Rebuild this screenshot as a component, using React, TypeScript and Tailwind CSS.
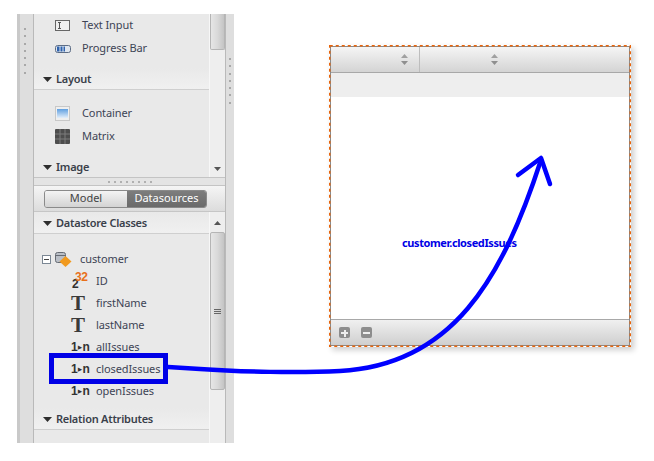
const font = "font-['Noto_Sans',sans-serif]";

function TriangleDown({ className = "" }: { className?: string }) {
  return (
    <svg width="9" height="5" viewBox="0 0 9 5" className={className}>
      <path d="M0 0h9L4.5 5z" fill="#2e2e2e" />
    </svg>
  );
}

function SectionHeader({ label }: { label: string }) {
  return (
    <div className="flex items-center gap-[4px] pl-[9px] pt-[2px] h-full text-[11px] font-semibold text-[#3a3f4a] tracking-[-0.25px]">
      <TriangleDown />
      <span>{label}</span>
    </div>
  );
}

function Section({ label }: { label: string }) {
  return (
    <div className="h-[22px] border-b border-[#cfcfcf] bg-gradient-to-b from-[#e9e9e9] to-[#f0f0f0]">
      <SectionHeader label={label} />
    </div>
  );
}

function WidgetRow({ icon, label }: { icon: React.ReactNode; label: string }) {
  return (
    <div className="h-[23px] flex items-center text-[11px] text-[#3d4455] tracking-[-0.1px]">
      <div className="w-[48px] pl-[21px] flex items-center">{icon}</div>
      <span>{label}</span>
    </div>
  );
}

function Dots({ className }: { className: string }) {
  return (
    <div className={className}>
      {Array.from({ length: 7 }).map((_, i) => (
        <div key={i} className="w-[2px] h-[2px] bg-[#a8a8a8]" />
      ))}
    </div>
  );
}

function RelationIcon() {
  return (
    <span className="font-['Liberation_Sans',sans-serif] font-bold text-[12px] text-[#333] flex items-center leading-none">
      1<span className="text-[5px] mx-[0.5px]">▶</span>n
    </span>
  );
}

function TypeT() {
  return <span className="font-['Liberation_Serif',serif] font-bold text-[21px] leading-[20px] text-[#3a3a3a]">T</span>;
}

function Int32Icon() {
  return (
    <span className="relative block w-[16px] h-[16px] font-['Liberation_Sans',sans-serif] font-bold leading-none">
      <span className="absolute left-[1px] top-[5px] text-[12px] text-[#2f2f2f]">2</span>
      <span className="absolute left-[4px] top-[-2px] text-[12px] text-[#e8701a] tracking-[-0.5px]">32</span>
    </span>
  );
}

function AttrRow({ icon, label, highlight }: { icon: React.ReactNode; label: string; highlight?: boolean }) {
  return (
    <div className="relative h-[22px] flex items-center text-[11px] text-[#3d4455] tracking-[-0.1px]">
      <div className="w-[25px] ml-[37px] flex items-center">{icon}</div>
      <span>{label}</span>
      {highlight && (
        <div className="absolute left-[15px] top-[-5px] w-[119px] h-[31px] border-[5px] border-[#0000e6]" />
      )}
    </div>
  );
}

function Sorter() {
  return (
    <svg width="7" height="11" viewBox="0 0 7 11">
      <path d="M3.5 0L7 4H0z" fill="#a0a0a0" />
      <path d="M3.5 11L0 7h7z" fill="#8f8f8f" />
    </svg>
  );
}

function Sidebar() {
  return (
    <div className="w-[217px] h-[429px] flex shrink-0">
      <div className="w-[17px] border-l-[3px] border-[#c9c9c9] border-r border-r-[#b9b9b9] bg-[#dedede] pt-[14px] pl-[4px]">
        <Dots className="flex flex-col gap-[5.3px]" />
      </div>

      <div className="w-[191px] flex flex-col bg-[#e9e9e9]">
        <div className="h-[163px] flex overflow-hidden">
          <div className="flex-1 flex flex-col">
            <WidgetRow
              label="Text Input"
              icon={
                <svg width="15" height="11" viewBox="0 0 15 11">
                  <rect x="0.5" y="0.5" width="14" height="10" fill="#efefef" stroke="#666" />
                  <path d="M3 2.5h3M4.5 2.5v6M3 8.5h3" stroke="#555" fill="none" />
                </svg>
              }
            />
            <WidgetRow
              label="Progress Bar"
              icon={
                <svg width="16" height="8" viewBox="0 0 16 8">
                  <rect x="0.5" y="0.5" width="15" height="7" rx="2" fill="#dfe6ef" stroke="#5d6d85" />
                  <rect x="2" y="1.5" width="8" height="5" fill="#2f62ad" />
                  <path d="M5 1v6M8 1v6M11 1v6" stroke="#dfe6ef" />
                </svg>
              }
            />
            <div className="h-[8px] shrink-0" />
            <Section label="Layout" />
            <div className="h-[12px] shrink-0" />
            <WidgetRow
              label="Container"
              icon={
                <svg width="15" height="15" viewBox="0 0 15 15">
                  <defs>
                    <linearGradient id="cont" x1="0" y1="0" x2="0" y2="1">
                      <stop offset="0" stopColor="#5f9fe0" />
                      <stop offset="1" stopColor="#e3eefa" />
                    </linearGradient>
                  </defs>
                  <rect x="0.5" y="0.5" width="14" height="14" fill="#efefef" stroke="#a5a5a5" strokeDasharray="1 1" />
                  <rect x="2" y="3" width="11" height="9" fill="url(#cont)" />
                </svg>
              }
            />
            <WidgetRow
              label="Matrix"
              icon={
                <svg width="15" height="15" viewBox="0 0 15 15">
                  <rect width="15" height="15" rx="1" fill="#4d4d4d" />
                  <path d="M5 0v15M10 0v15M0 5h15M0 10h15" stroke="#7c7c7c" />
                </svg>
              }
            />
            <div className="h-[8px] shrink-0" />
            <div className="h-[21px] shrink-0">
              <SectionHeader label="Image" />
            </div>
          </div>
          <div className="w-[16px] border-l border-[#f7f7f7] bg-[#eeeeee] flex flex-col items-center">
            <div className="w-[15px] h-[36px] rounded-b-[2px] border border-t-0 border-[#b5b5b5] bg-gradient-to-r from-[#e6e6e6] via-[#d9d9d9] to-[#c4c4c4]" />
            <svg width="7" height="4" viewBox="0 0 7 4" className="mt-auto mb-[6px]">
              <path d="M0 0h7L3.5 4z" fill="#555" />
            </svg>
          </div>
        </div>

        <div className="h-[9px] border-y border-[#c4c4c4] bg-[#e4e4e4] flex items-center justify-center gap-[4px]">
          {Array.from({ length: 8 }).map((_, i) => (
            <div key={i} className="w-[2px] h-[2px] bg-[#b0b0b0]" />
          ))}
        </div>

        <div className="h-[26px] border-b border-[#c6c6c6] bg-gradient-to-b from-[#f5f5f5] to-[#dcdcdc] flex items-center pl-[10px]">
          <div className="w-[163px] h-[18px] flex rounded-[3px] overflow-hidden border border-[#8a8a8a] text-[11px] tracking-[0px]">
            <div className="w-[82px] bg-gradient-to-b from-[#f4f4f4] to-[#d3d3d3] text-[#444] flex items-center justify-center">Model</div>
            <div className="flex-1 bg-gradient-to-b from-[#7d7d7d] to-[#6a6a6a] text-white flex items-center justify-center">Datasources</div>
          </div>
        </div>

        <div className="flex-1 flex">
          <div className="flex-1 flex flex-col">
            <Section label="Datastore Classes" />
            <div className="h-[14px]" />
            <div className="h-[22px] flex items-center text-[11px] text-[#3d4455] tracking-[-0.1px]">
              <div className="ml-[8px] w-[9px] h-[9px] border border-[#7b8794] bg-white flex items-center justify-center">
                <div className="w-[5px] h-[1px] bg-[#444]" />
              </div>
              <svg width="17" height="15" viewBox="0 0 17 15" className="ml-[4px]">
                <rect x="0.5" y="0.5" width="10" height="10" rx="2" fill="#b9bec6" stroke="#666b73" />
                <path d="M1 3.5h9" stroke="#666b73" />
                <path d="M10.5 4L16.5 9.5L10.5 15L4.5 9.5z" fill="#f19a1f" />
              </svg>
              <span className="ml-[8px]">customer</span>
            </div>
            <AttrRow icon={<Int32Icon />} label="ID" />
            <AttrRow icon={<TypeT />} label="firstName" />
            <AttrRow icon={<TypeT />} label="lastName" />
            <AttrRow icon={<RelationIcon />} label="allIssues" />
            <AttrRow icon={<RelationIcon />} label="closedIssues" highlight />
            <AttrRow icon={<RelationIcon />} label="openIssues" />
            <div className="h-[6px]" />
            <Section label="Relation Attributes" />
          </div>
          <div className="w-[16px] border-l border-[#f7f7f7] bg-[#eeeeee] flex flex-col items-center">
            <svg width="7" height="4" viewBox="0 0 7 4" className="mt-[9px]">
              <path d="M0 4h7L3.5 0z" fill="#555" />
            </svg>
            <div className="w-[15px] h-[158px] mt-[7px] rounded-[2px] border border-[#b5b5b5] bg-gradient-to-r from-[#e6e6e6] via-[#d9d9d9] to-[#c4c4c4] flex flex-col items-center justify-center gap-[1px]">
              <div className="w-[7px] h-[1px] bg-[#666]" />
              <div className="w-[7px] h-[1px] bg-[#666]" />
              <div className="w-[7px] h-[1px] bg-[#666]" />
            </div>
          </div>
        </div>
      </div>

      <div className="flex-1 border-l border-[#b9b9b9] bg-[#dedede] pt-[44px] pl-[3px]">
        <Dots className="flex flex-col gap-[5.3px]" />
      </div>
    </div>
  );
}

function Canvas() {
  return (
    <div className="relative w-[302px] h-[302px] ml-[95px] mt-[31px] shrink-0 p-[1px] shadow-[3px_3px_6px_rgba(0,0,0,0.2)] bg-white">
      <div className="h-full border border-[#8a8a8a] bg-white flex flex-col">
        <div className="h-[26px] border-b border-[#a8a8a8] bg-gradient-to-b from-[#f5f5f5] to-[#d4d4d4] flex">
          <div className="w-[89px] border-r border-[#bdbdbd] flex items-center justify-end pr-[11px]">
            <Sorter />
          </div>
          <div className="flex-1 flex items-center pl-[71px]">
            <Sorter />
          </div>
        </div>
        <div className="h-[24px] bg-[#eeeeee]" />
        <div className="flex-1 flex pt-[138px] pl-[71px]">
          <span className="font-['Noto_Sans',sans-serif] font-bold text-[11px] leading-[15px] tracking-[-0.4px] text-[#0000e6]">
            customer.closedIssues
          </span>
        </div>
        <div className="h-[26px] border-t border-[#a8a8a8] bg-gradient-to-b from-[#f0f0f0] to-[#cfcfcf] flex items-center pl-[8px] gap-[11px]">
          <div className="relative w-[11px] h-[11px] rounded-[2px] bg-[#8d8d8d]">
            <div className="absolute left-[2px] top-[5px] w-[7px] h-[2px] bg-[#eee]" />
            <div className="absolute left-[4.5px] top-[2.5px] w-[2px] h-[7px] bg-[#eee]" />
          </div>
          <div className="relative w-[11px] h-[11px] rounded-[2px] bg-[#8d8d8d]">
            <div className="absolute left-[2px] top-[5px] w-[7px] h-[2px] bg-[#eee]" />
          </div>
        </div>
      </div>
      {/* selection outline */}
      <svg width="302" height="302" viewBox="0 0 302 302" className="absolute left-0 top-0" fill="none">
        <rect x="0.75" y="0.75" width="300.5" height="300.5" stroke="#e8640a" strokeWidth="1.5" strokeDasharray="3 3" />
      </svg>
    </div>
  );
}

export default function App() {
  return (
    <div className={`relative w-[654px] h-[461px] bg-white overflow-hidden flex items-start pl-[17px] pt-[14px] ${font}`}>
      <Sidebar />
      <Canvas />
      <svg width="654" height="461" viewBox="0 0 654 461" className="absolute left-0 top-0 pointer-events-none" fill="none" stroke="#0000ff" strokeWidth="4.5" strokeLinecap="round" strokeLinejoin="round">
        <path d="M168 367 L200 369 C 240 372, 300 373, 340 371 C 452 365, 502 280, 541 160" />
        <path d="M518 175 L541 158 L550 184" />
      </svg>
    </div>
  );
}
